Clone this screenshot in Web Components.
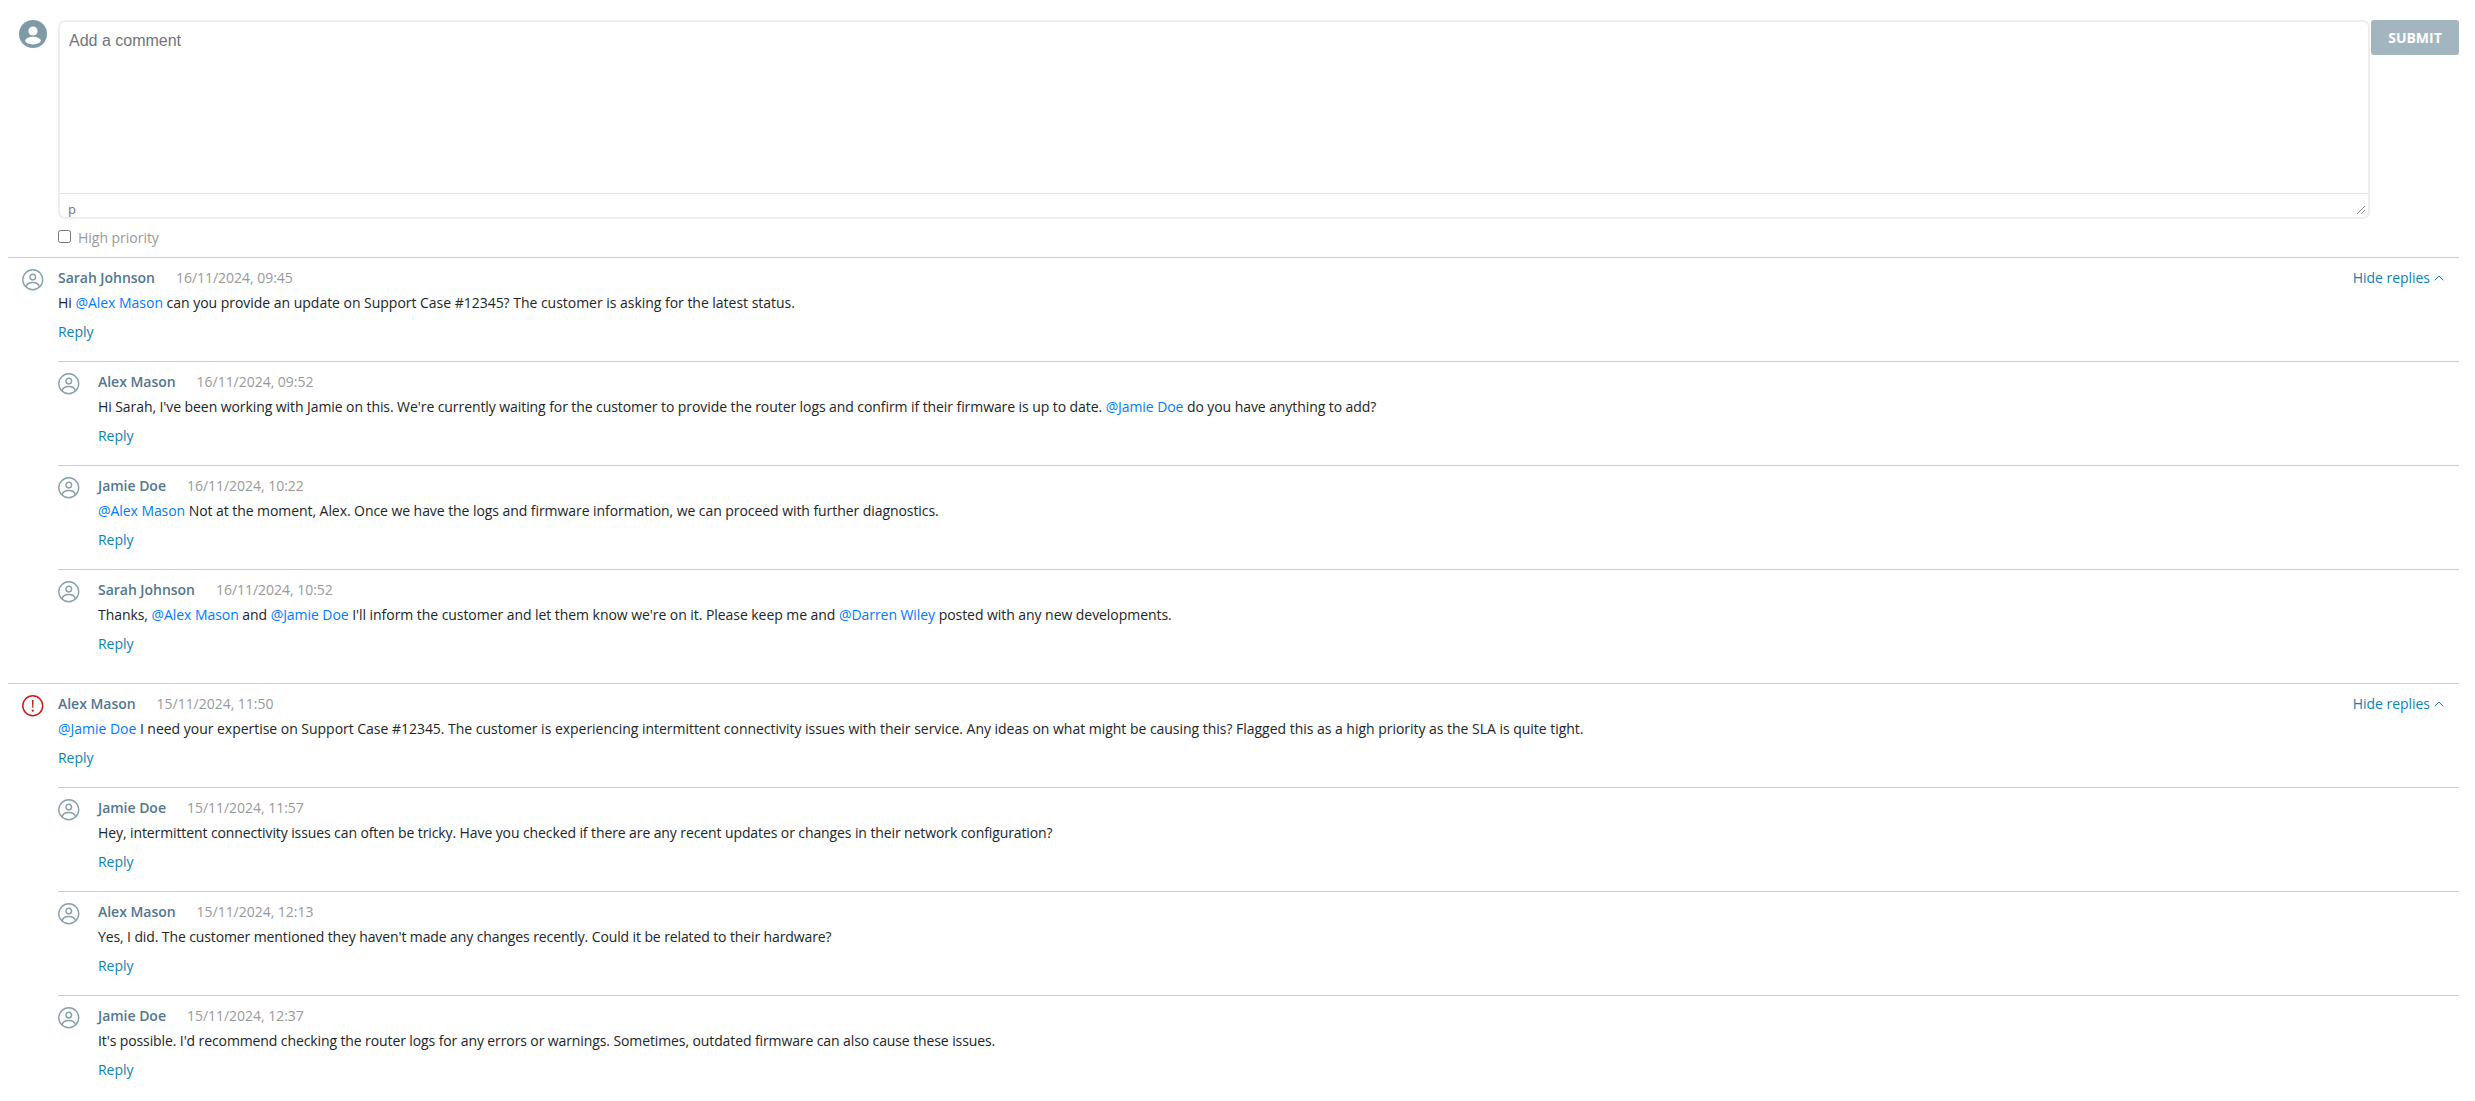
<!DOCTYPE html>
<html>
<head>
<meta charset="utf-8">
<title>Comments</title>
<style>
  html, body { margin: 0; background: #fff; }
  body { font-family: "Open Sans", "Liberation Sans", sans-serif; font-size: 14px; color: #212529; letter-spacing: -0.026px; }
</style>
</head>
<body>
<comment-feed>
  <comment-box></comment-box>

  <comment-item name="Sarah Johnson" time="16/11/2024, 09:45" toggle>
    Hi <a>@Alex Mason</a> can you provide an update on Support Case #12345? The customer is asking for the latest status.
    <comment-item slot="replies" reply tracking="-0.078" name="Alex Mason" time="16/11/2024, 09:52">Hi Sarah, I've been working with Jamie on this. We're currently waiting for the customer to provide the router logs and confirm if their firmware is up to date. <a>@Jamie Doe</a> do you have anything to add?</comment-item>
    <comment-item slot="replies" reply tracking="-0.064" name="Jamie Doe" time="16/11/2024, 10:22"><a>@Alex Mason</a> Not at the moment, Alex. Once we have the logs and firmware information, we can proceed with further diagnostics.</comment-item>
    <comment-item slot="replies" reply tracking="-0.056" name="Sarah Johnson" time="16/11/2024, 10:52">Thanks, <a>@Alex Mason</a> and <a>@Jamie Doe</a> I'll inform the customer and let them know we're on it. Please keep me and <a>@Darren Wiley</a> posted with any new developments.</comment-item>
  </comment-item>

  <comment-item name="Alex Mason" time="15/11/2024, 11:50" toggle priority>
    <a>@Jamie Doe</a> I need your expertise on Support Case #12345. The customer is experiencing intermittent connectivity issues with their service. Any ideas on what might be causing this? Flagged this as a high priority as the SLA is quite tight.
    <comment-item slot="replies" reply tracking="-0.1" name="Jamie Doe" time="15/11/2024, 11:57">Hey, intermittent connectivity issues can often be tricky. Have you checked if there are any recent updates or changes in their network configuration?</comment-item>
    <comment-item slot="replies" reply tracking="-0.11" name="Alex Mason" time="15/11/2024, 12:13">Yes, I did. The customer mentioned they haven't made any changes recently. Could it be related to their hardware?</comment-item>
    <comment-item slot="replies" reply tracking="-0.105" name="Jamie Doe" time="15/11/2024, 12:37">It's possible. I'd recommend checking the router logs for any errors or warnings. Sometimes, outdated firmware can also cause these issues.</comment-item>
  </comment-item>
</comment-feed>

<script>
class CommentFeed extends HTMLElement {
  connectedCallback() {
    this.attachShadow({ mode: 'open' });
    this.shadowRoot.innerHTML = `
      <style>
        :host { display: block; padding: 20px 16px 0 8px; }
      </style>
      <slot></slot>
    `;
  }
}
customElements.define('comment-feed', CommentFeed);

class CommentBox extends HTMLElement {
  connectedCallback() {
    this.attachShadow({ mode: 'open' });
    this.shadowRoot.innerHTML = `
      <style>
        :host { display: block; margin-bottom: 9px; }
        .top { display: flex; align-items: flex-start; }
        .avatar { width: 50px; flex: none; padding-left: 11px; box-sizing: border-box; }
        .avatar svg { display: block; width: 28px; height: 28px; }
        .editor {
          flex: 1;
          height: 199px;
          box-sizing: border-box;
          border: 2px solid #eee;
          border-radius: 7px;
          display: flex;
          flex-direction: column;
          position: relative;
        }
        .area {
          flex: 1;
          padding: 7px 9px;
          font: 16px/24px "Liberation Sans", Arial, sans-serif;
          letter-spacing: 0;
          color: #6c757d;
        }
        .path {
          height: 24px;
          box-sizing: border-box;
          border-top: 1px solid #e4e4e4;
          padding-left: 8px;
          font-size: 13px;
          line-height: 30px;
          color: #777;
          overflow: hidden;
        }
        .grip { position: absolute; right: 2px; bottom: 2px; width: 10px; height: 10px; }
        button {
          width: 88px;
          height: 35px;
          margin-left: 1px;
          flex: none;
          border: 0;
          border-radius: 3px;
          background: #a3b5bf;
          color: #fff;
          font: 700 14px "Open Sans", sans-serif;
          padding: 0;
        }
        label {
          display: flex;
          align-items: flex-start;
          gap: 7px;
          margin: 9px 0 0 50px;
          line-height: 20px;
          color: #999;
        }
        .check {
          width: 13px;
          height: 13px;
          box-sizing: border-box;
          border: 1px solid #767676;
          border-radius: 2.5px;
          margin-top: 2px;
        }
      </style>
      <div class="top">
        <div class="avatar">
          <svg viewBox="0 0 28 28">
            <defs><clipPath id="c"><circle cx="14" cy="14" r="14"/></clipPath></defs>
            <circle cx="14" cy="14" r="14" fill="#7f9aa6"/>
            <circle cx="14" cy="11" r="4.6" fill="#fff"/>
            <ellipse cx="14" cy="20.6" rx="7.8" ry="3.8" fill="#fff" clip-path="url(#c)"/>
          </svg>
        </div>
        <div class="editor">
          <div class="area">Add a comment</div>
          <div class="path">p</div>
          <svg class="grip" viewBox="0 0 10 10"><path d="M1 9 9 1M5 9 9 5" stroke="#888" stroke-width="1" fill="none"/></svg>
        </div>
        <button>SUBMIT</button>
      </div>
      <label><span class="check"></span>High priority</label>
    `;
  }
}
customElements.define('comment-box', CommentBox);

class CommentItem extends HTMLElement {
  connectedCallback() {
    const reply = this.hasAttribute('reply');
    const priority = this.hasAttribute('priority');
    const tracking = this.getAttribute('tracking') || '-0.026';
    const icon = priority
      ? `<svg viewBox="0 0 22 22" fill="none"><circle cx="11" cy="11" r="10.2" stroke="#c41f1a" stroke-width="1.5"/><path d="M10.1 5.2h1.8l-.4 8h-1z" fill="#c41f1a"/><circle cx="11" cy="16" r="1.1" fill="#c41f1a"/></svg>`
      : `<svg viewBox="0 0 22 22" fill="none" stroke="#87a0ac" stroke-width="1.4"><circle cx="11" cy="11" r="10.2"/><circle cx="11" cy="8.3" r="2.9"/><path d="M4.3 18.4c.4-3 3.4-4.6 6.7-4.6s6.3 1.6 6.7 4.6"/></svg>`;
    this.attachShadow({ mode: 'open' });
    this.shadowRoot.innerHTML = `
      <style>
        :host { display: block; margin-bottom: ${reply ? '0' : '10px'}; }
        .row {
          display: flex;
          border-top: 1px solid #ccc;
          margin-left: ${reply ? '50px' : '0'};
          padding: 10px 0 0 ${reply ? '0' : '14px'};
          height: 104px;
          box-sizing: border-box;
        }
        .icon { width: ${reply ? '40px' : '36px'}; flex: none; padding-top: 1px; }
        .icon svg { display: block; width: 21.5px; height: 21.5px; }
        .main { flex: 1; min-width: 0; }
        .head { display: flex; height: 20px; line-height: 20px; }
        .name { font-weight: 600; color: #54768f; margin-right: 21px; }
        .time { color: #999; }
        .toggle { margin-left: auto; margin-right: 15px; color: #0a85b0; display: flex; align-items: center; gap: 4px; }
        .toggle svg { width: 10px; height: 6px; }
        .text { margin-top: 5px; line-height: 20px; letter-spacing: ${tracking}px; }
        .reply { margin-top: 9px; line-height: 20px; color: #0a85b0; }
        ::slotted(a) { color: #007bff; }
      </style>
      <div class="row">
        <div class="icon">${icon}</div>
        <div class="main">
          <div class="head">
            <span class="name">${this.getAttribute('name')}</span>
            <span class="time">${this.getAttribute('time')}</span>
            ${this.hasAttribute('toggle') ? `<span class="toggle">Hide replies <svg viewBox="0 0 10 6" fill="none"><path d="M.7 5.3 5 1l4.3 4.3" stroke="#0a85b0"/></svg></span>` : ''}
          </div>
          <div class="text"><slot></slot></div>
          <div class="reply">Reply</div>
        </div>
      </div>
      <slot name="replies"></slot>
    `;
  }
}
customElements.define('comment-item', CommentItem);
</script>
</body>
</html>
